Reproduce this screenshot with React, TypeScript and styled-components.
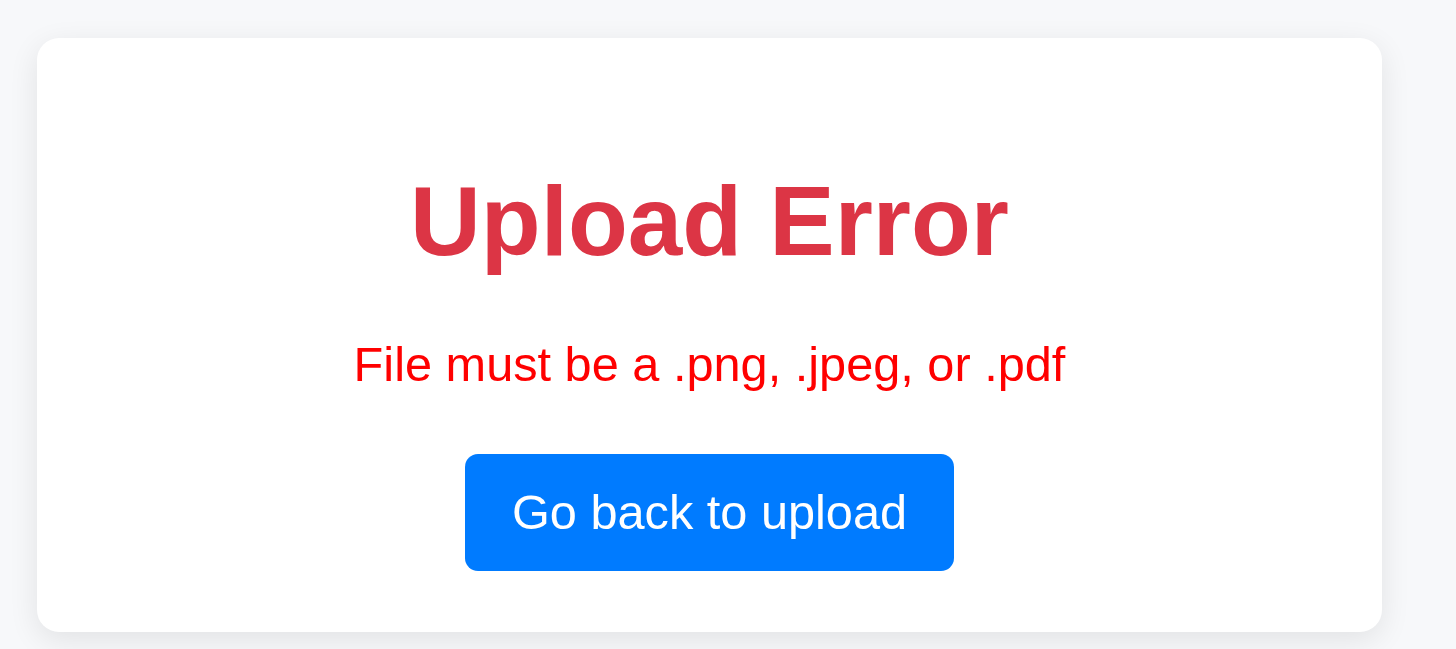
import React from "react";
import styled, { createGlobalStyle } from "styled-components";

const GlobalStyle = createGlobalStyle`
  html, body {
    margin: 0;
    padding: 0;
    background: #f7f8fa;
    font-family: "Liberation Sans", Arial, sans-serif;
  }
`;

const Page = styled.main`
  display: flex;
  padding: 38px 0 0 37px;
  height: 649px;
  box-sizing: border-box;
  overflow: hidden;
`;

const Card = styled.section`
  width: 1345px;
  height: 594px;
  box-sizing: border-box;
  background: #ffffff;
  border-radius: 22px;
  box-shadow: 0 8px 30px rgba(0, 0, 0, 0.09);
  display: flex;
  flex-direction: column;
  align-items: center;
  padding-top: 127px;
`;

const Title = styled.h1`
  margin: 0;
  font-size: 98px;
  line-height: 1.15;
  font-weight: 700;
  color: #dc3545;
`;

const Message = styled.p`
  margin: 58px 0 0;
  font-size: 48.7px;
  line-height: 1.15;
  color: #ff0000;
`;

const BackButton = styled.button`
  margin-top: 62px;
  width: 489px;
  height: 117px;
  border: none;
  border-radius: 13px;
  background: #007bff;
  color: #ffffff;
  font-family: "Liberation Sans", Arial, sans-serif;
  font-size: 48.7px;
  cursor: pointer;
`;

export default function App() {
  return (
    <>
      <GlobalStyle />
      <Page>
        <Card>
          <Title>Upload Error</Title>
          <Message>File must be a .png, .jpeg, or .pdf</Message>
          <BackButton>Go back to upload</BackButton>
        </Card>
      </Page>
    </>
  );
}
